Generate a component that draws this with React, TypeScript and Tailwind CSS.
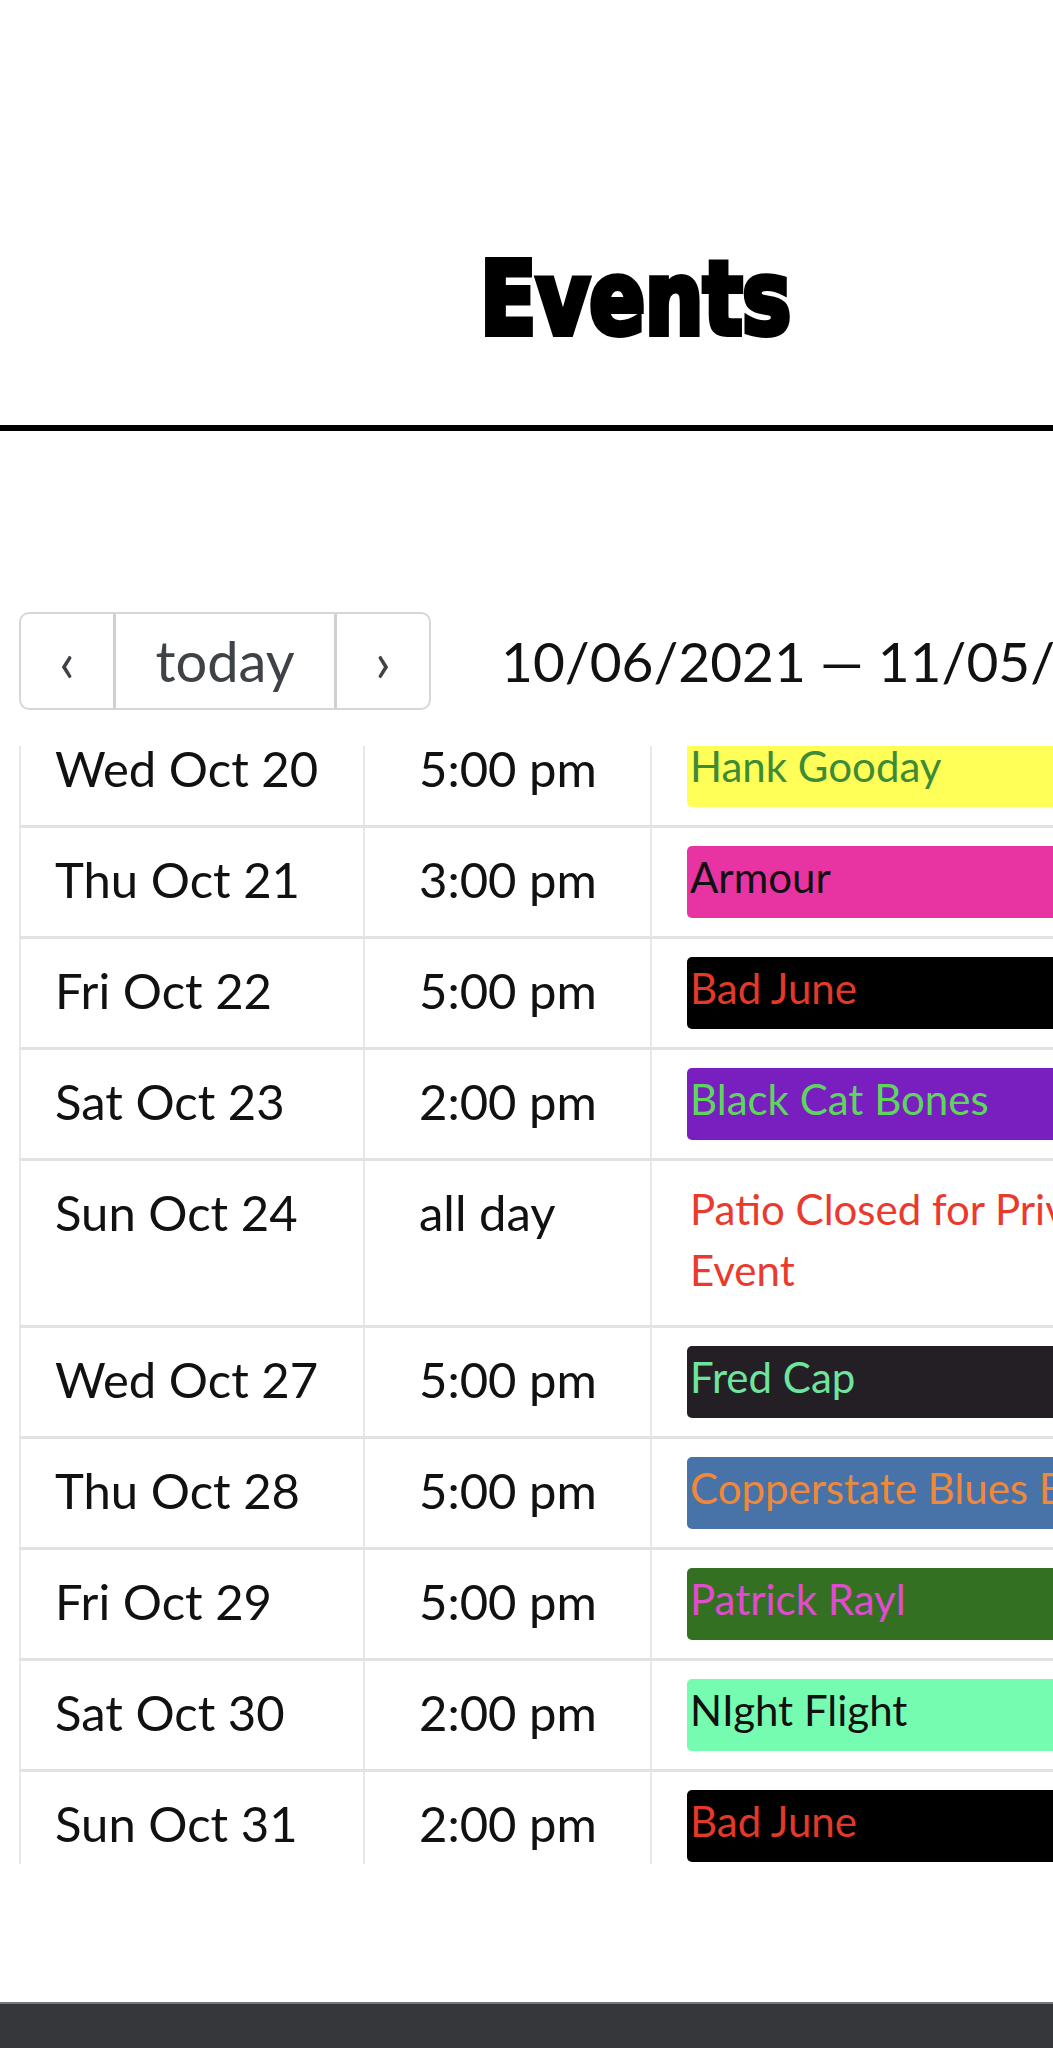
type EventRow = {
  day: string;
  time: string;
  title: string;
  bar?: string;
  text: string;
};

const events: EventRow[] = [
  { day: 'Wed Oct 20', time: '5:00 pm', title: 'Hank Gooday', bar: 'bg-[#ffff57]', text: 'text-[#3d8b37]' },
  { day: 'Thu Oct 21', time: '3:00 pm', title: 'Armour', bar: 'bg-[#e833a2]', text: 'text-[#111111]' },
  { day: 'Fri Oct 22', time: '5:00 pm', title: 'Bad June', bar: 'bg-black', text: 'text-[#e23a26]' },
  { day: 'Sat Oct 23', time: '2:00 pm', title: 'Black Cat Bones', bar: 'bg-[#7a1fbf]', text: 'text-[#5ed65e]' },
  { day: 'Sun Oct 24', time: 'all day', title: 'Patio Closed for Private Event', text: 'text-[#ea3a2e]' },
  { day: 'Wed Oct 27', time: '5:00 pm', title: 'Fred Cap', bar: 'bg-[#231f25]', text: 'text-[#6ee59e]' },
  { day: 'Thu Oct 28', time: '5:00 pm', title: 'Copperstate Blues Band', bar: 'bg-[#4773a8]', text: 'text-[#f0883a]' },
  { day: 'Fri Oct 29', time: '5:00 pm', title: 'Patrick Rayl', bar: 'bg-[#337022]', text: 'text-[#e04bd0]' },
  { day: 'Sat Oct 30', time: '2:00 pm', title: 'NIght Flight', bar: 'bg-[#76fcb0]', text: 'text-[#111111]' },
  { day: 'Sun Oct 31', time: '2:00 pm', title: 'Bad June', bar: 'bg-black', text: 'text-[#e23a26]' },
];

export default function App() {
  return (
    <div className="w-[1053px] h-[2048px] overflow-hidden bg-white font-['Lato',sans-serif]">
      <div className="w-[1272px] flex flex-col">
        <header className="pt-[249px] pb-[75px] border-b-[6px] border-black text-center">
          <h1 className="inline-block scale-x-[0.9] text-[101px] leading-none font-bold text-black font-['DejaVu_Sans_Condensed','DejaVu_Sans',sans-serif] [font-stretch:condensed] [-webkit-text-stroke:6px_black]">
            Events
          </h1>
        </header>

        <main className="px-[19px] pt-[181px]">
          {/* toolbar */}
          <div className="flex items-center h-[98px]">
            <div className="flex h-full rounded-[10px] border-2 border-[#d6d6d6] text-[#3f4347] text-[56px] leading-[1.2]">
              <button className="w-[92px] flex items-center justify-center">‹</button>
              <button className="w-[221px] flex items-center justify-center border-l-[3px] border-[#d0d0d0]">today</button>
              <button className="w-[95px] flex items-center justify-center border-l-[3px] border-[#d0d0d0]">›</button>
            </div>
            <h2 className="ml-[70px] text-[55px] leading-[1.2] text-[#111] whitespace-nowrap">10/06/2021 — 11/05/2021</h2>
          </div>

          {/* list */}
          <div className="mt-[36px] h-[1118px] overflow-hidden">
            <div className="-mt-[32px]">
              {events.map((ev, index) => (
                <div key={index} className="grid grid-cols-[344px_287px_603px] border-t-[3px] border-[#e2e2e2]">
                  <div className="border-l-2 border-[#e8e8e8] pl-[34px] pt-[21px] text-[49px] leading-[60px] text-[#111]">
                    {ev.day}
                  </div>
                  <div className="border-l-2 border-[#e8e8e8] pl-[54px] pt-[21px] text-[49px] leading-[60px] text-[#111]">
                    {ev.time}
                  </div>
                  <div className="border-l-2 border-[#e8e8e8] pl-[35px] pr-[37px] py-[18px] text-[42px]">
                    {ev.bar ? (
                      <div className={`h-[72px] rounded-[5px] pl-[3px] leading-[63px] whitespace-nowrap overflow-hidden ${ev.bar} ${ev.text}`}>
                        {ev.title}
                      </div>
                    ) : (
                      <div className={`leading-[61px] pl-[3px] pb-[6px] ${ev.text}`}>{ev.title}</div>
                    )}
                  </div>
                </div>
              ))}
            </div>
          </div>
        </main>

        <footer className="mt-[138px] h-[200px] bg-[#36373b] border-t-2 border-[#77787c]" />
      </div>
    </div>
  );
}
